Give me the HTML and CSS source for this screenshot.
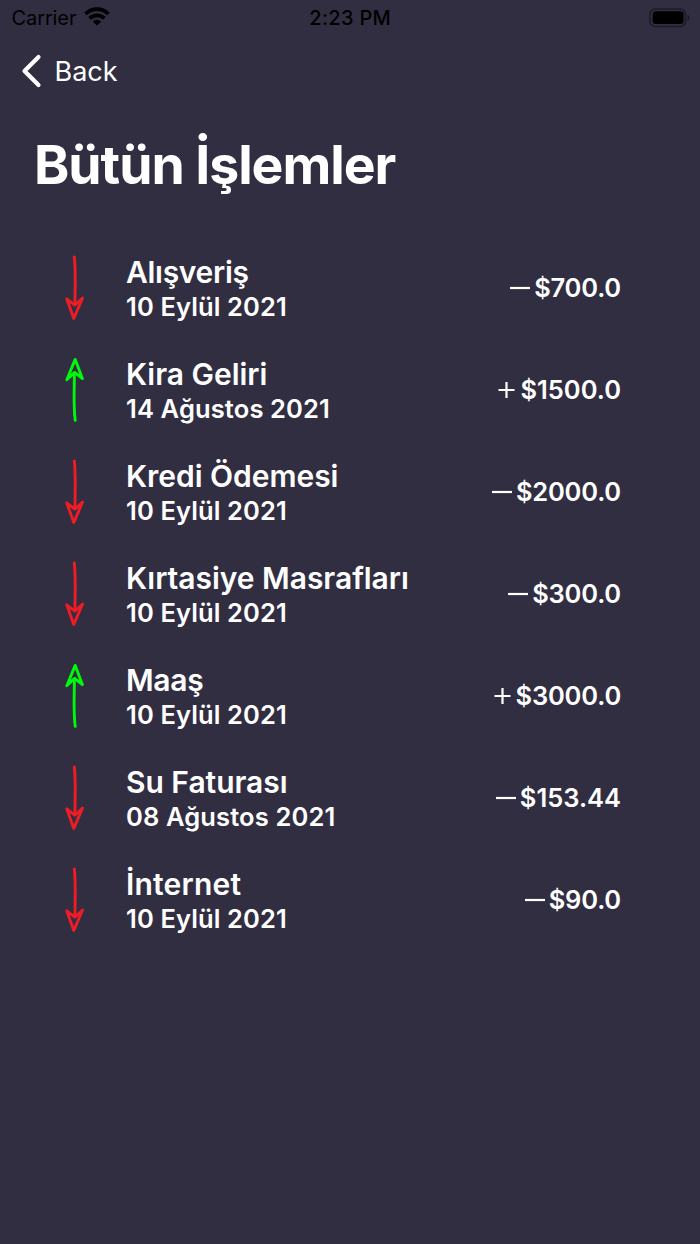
FILE: index.html
```html
<!DOCTYPE html>
<html lang="tr">
<head>
<meta charset="utf-8">
<title>Bütün İşlemler</title>
<link rel="stylesheet" href="styles.css">
</head>
<body>
<svg class="symbols" aria-hidden="true">
  <symbol id="down" viewBox="0 0 20 66"><path d="M9.3 2C11 17 9.9 34 10 49.5M1.7 43.8L8.8 63.4L17.6 43L9.8 50.2Z"/></symbol>
  <symbol id="up" viewBox="0 0 20 66"><path d="M10.2 63.4C8.2 48 9.4 32 9.4 15.5M1.8 22.8L10.2 2.4L17.4 21.6L9.6 15.4Z"/></symbol>
</svg>
<header class="status">
  <div class="carrier"><span>Carrier</span>
    <svg class="wifi" viewBox="0 0 26 20"><path d="M1.6 7A15.8 15.8 0 0 1 24.4 7M5.6 11.4A10.4 10.4 0 0 1 20.4 11.4"/><path class="solid" d="M8.7 14.6A6 6 0 0 1 17.3 14.6L13 18.6Z"/></svg>
  </div>
  <div class="time">2:23 PM</div>
  <svg class="battery" viewBox="0 0 42 20"><rect class="case" x="1" y="1" width="35.5" height="17.5" rx="5"/><rect x="3.6" y="3.2" width="31" height="12.8" rx="3"/><path class="tip" d="M38.5 6.5q2 1 2 3.3t-2 3.3z"/></svg>
</header>
<nav class="back">
  <svg viewBox="0 0 22 34"><path d="M17.5 3L3.5 17L17.5 31"/></svg><span>Back</span>
</nav>
<h1 class="title">Bütün İşlemler</h1>
<main class="list">
  <div class="row"><svg class="arrow down"><use href="#down"/></svg><div class="info"><div class="name tight">Alışveriş</div><div class="date">10 Eylül 2021</div></div><div class="amount"><svg class="sign minus" viewBox="0 0 22 20"><path d="M1 10H21"/></svg><span>$700.0</span></div></div>
  <div class="row"><svg class="arrow up"><use href="#up"/></svg><div class="info"><div class="name">Kira Geliri</div><div class="date">14 Ağustos 2021</div></div><div class="amount loose"><svg class="sign plus" viewBox="0 0 20 20"><path d="M1.5 10H17.5M9.5 2V18"/></svg><span>$1500.0</span></div></div>
  <div class="row"><svg class="arrow down"><use href="#down"/></svg><div class="info"><div class="name">Kredi Ödemesi</div><div class="date">10 Eylül 2021</div></div><div class="amount"><svg class="sign minus" viewBox="0 0 22 20"><path d="M1 10H21"/></svg><span>$2000.0</span></div></div>
  <div class="row"><svg class="arrow down"><use href="#down"/></svg><div class="info"><div class="name">Kırtasiye Masrafları</div><div class="date">10 Eylül 2021</div></div><div class="amount"><svg class="sign minus" viewBox="0 0 22 20"><path d="M1 10H21"/></svg><span>$300.0</span></div></div>
  <div class="row"><svg class="arrow up"><use href="#up"/></svg><div class="info"><div class="name tight">Maaş</div><div class="date">10 Eylül 2021</div></div><div class="amount"><svg class="sign plus" viewBox="0 0 20 20"><path d="M1.5 10H17.5M9.5 2V18"/></svg><span>$3000.0</span></div></div>
  <div class="row"><svg class="arrow down"><use href="#down"/></svg><div class="info"><div class="name">Su Faturası</div><div class="date">08 Ağustos 2021</div></div><div class="amount loose"><svg class="sign minus" viewBox="0 0 22 20"><path d="M1 10H21"/></svg><span>$153.44</span></div></div>
  <div class="row"><svg class="arrow down"><use href="#down"/></svg><div class="info"><div class="name wide">İnternet</div><div class="date">10 Eylül 2021</div></div><div class="amount"><svg class="sign minus" viewBox="0 0 22 20"><path d="M1 10H21"/></svg><span>$90.0</span></div></div>
</main>
</body>
</html>
```
FILE: styles.css
```css
* { box-sizing: border-box; }
body {
  margin: 0;
  min-height: 1244px;
  background: #322e42;
  color: #fff;
  font-family: Inter, "Liberation Sans", sans-serif;
}
svg { display: block; fill: none; flex: none; }
.symbols { position: absolute; width: 0; height: 0; }
.status {
  display: grid;
  grid-template-columns: 1fr auto 1fr;
  align-items: center;
  height: 36px;
  padding: 0 9px 0 11.5px;
  color: #000;
  font-size: 20px;
  line-height: 36px;
}
.carrier { display: flex; align-items: center; gap: 8px; letter-spacing: -0.1px; }
.wifi { width: 26px; height: 20px; margin-bottom: 2px; stroke: #000; stroke-width: 3.8; }
.wifi .solid { fill: #000; stroke: none; }
.time { margin-right: 2px; font-weight: 500; letter-spacing: 0.3px; }
.battery { justify-self: end; width: 42px; height: 20px; fill: #000; }
.battery .case { fill: none; stroke: #1d1a28; stroke-width: 1.6; }
.battery .tip { fill: #1d1a28; }
.back {
  display: flex;
  align-items: center;
  gap: 11.5px;
  height: 70px;
  padding-left: 21px;
  font-size: 27px;
}
.back svg { width: 22px; height: 34px; stroke: #fff; stroke-width: 4.2; stroke-linecap: round; stroke-linejoin: round; }
.title {
  margin: 0;
  padding: 26.5px 0 0 34px;
  height: 130px;
  font-size: 53.5px;
  line-height: 64px;
  font-weight: 700;
  letter-spacing: -1.05px;
}
.row { display: flex; height: 102px; padding-left: 65px; padding-right: 79px; }
.arrow { width: 20px; height: 66px; margin-top: 19px; stroke-width: 2.9; stroke-linecap: round; stroke-linejoin: round; }
.down { stroke: #ee1c25; }
.up { stroke: #00f80d; }
.info { flex: 1; padding: 18px 0 0 41px; white-space: nowrap; }
.name { font-size: 30px; line-height: 36px; font-weight: 600; letter-spacing: -0.03px; }
.name.tight { letter-spacing: -0.3px; }
.name.wide { letter-spacing: 0.2px; }
.date { padding-top: 1px; font-size: 25.5px; line-height: 32px; font-weight: 600; letter-spacing: 0.13px; }
.amount { display: flex; align-items: center; gap: 3px; height: 104px; font-size: 25.5px; font-weight: 600; letter-spacing: -0.2px; }
.amount.loose { letter-spacing: 0; }
.amount span { margin-bottom: 1px; }
.sign { width: 22px; height: 20px; stroke: #fff; stroke-width: 2.2; }
.sign.plus { width: 20px; }
```
